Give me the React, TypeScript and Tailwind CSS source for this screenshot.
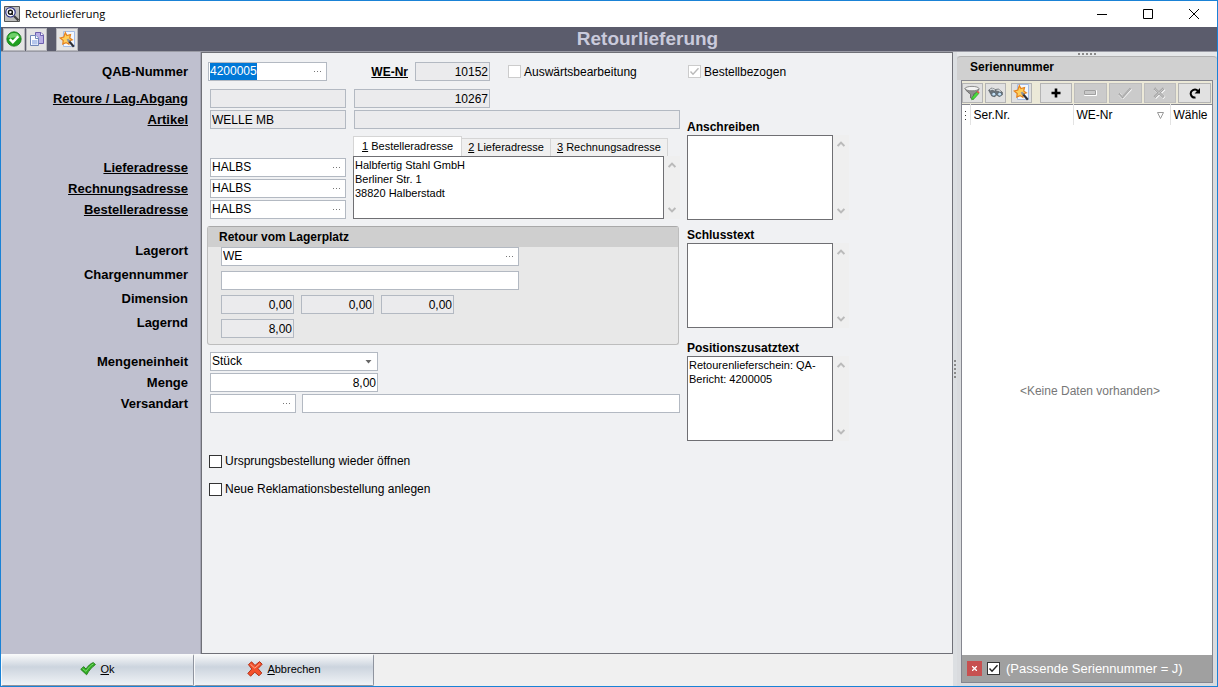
import { ReactNode, useEffect, useRef } from "react";
import clsx from "clsx";

const fieldBox = "h-[19px] border border-[#b3b9c2] text-[12px] leading-[17px] text-black";

const ConfirmIcon = () => (
  <svg width="16" height="16" viewBox="0 0 16 16">
    <circle cx="8" cy="8" r="7.2" fill="#1fa01f" stroke="#14761a" strokeWidth="0.8" />
    <path d="M2.2 6.5a6 6 0 0 1 11.6 0C10 5 6 8 2.2 6.5z" fill="#6fd06a" />
    <path d="M3.8 8.2l3 3L12.3 5.4" fill="none" stroke="#fff" strokeWidth="2.4" />
  </svg>
);

const CopyIcon = () => (
  <svg width="16" height="16" viewBox="0 0 16 16">
    <path d="M6.5 1.5h5.5l2.5 2.5v8.5h-8z" fill="#b9aee6" stroke="#6d5fae" />
    <path d="M11.5 1.5v3h3" fill="#fff" stroke="#6d5fae" />
    <path d="M1.5 4.5h5.5l2.5 2.5v7.5h-8z" fill="#fbfcff" stroke="#6f86b8" />
    <path d="M6.5 4.5v3h3" fill="#fff" stroke="#6f86b8" />
    <path d="M3 9h5.5v4.5H3z" fill="#b4c6ec" />
  </svg>
);

const WizardIcon = () => (
  <svg width="17" height="17" viewBox="0 0 17 17">
    <path d="M4.5 .5h11v15h-11z" fill="#f2f7ff" stroke="#a3bce6" />
    <path d="M6.3 1.6l1.6 2.9 3.6-1-.8 3.5 2.6 1.8-3.1 1.2-.3 3.3-2.9-1.7-3.2 1.5.4-3.6L1.2 7l3.6-.9z" fill="#ffcf5c" stroke="#e5821c" strokeWidth="1.2" />
    <path d="M9.4 9.4l5.4 6.4" stroke="#2e3038" strokeWidth="2.2" />
    <path d="M8.4 8.2l2 2.4" stroke="#8f94a0" strokeWidth="2" />
  </svg>
);

const FilterIcon = () => (
  <svg width="16" height="16" viewBox="0 0 16 16">
    <path d="M1 3.5C3 7 5 8 6.5 9.2V13l3 1.3V9C12 8 14 6.5 15 4z" fill="#8f8f8f" stroke="#5c5c5c" strokeWidth="0.8" />
    <ellipse cx="8" cy="3.6" rx="7" ry="2.2" fill="#f3f3f3" stroke="#777" strokeWidth="0.8" />
    <path d="M7.6 14.8l.6-2.6 4.6-5.4 2 1.7-4.7 5.3z" fill="#4bdc3c" stroke="#2a9b25" strokeWidth="0.7" />
    <path d="M12.6 7l1.2-1.2 1.8 1.5-1 1.3z" fill="#e2574c" />
  </svg>
);

const BinocularsIcon = () => (
  <svg width="15" height="15" viewBox="0 0 16 16">
    <path d="M.6 5.5l3.4-2.3 4 1.6 3-.6 4.4 3.6v2.7l-3.4 1.8-3-1.6-1.6 1.8-3.4-.7z" fill="#6a7177" stroke="#4d5358" strokeWidth="0.6" />
    <path d="M2.2 5.4l2.4-1.2 2.8 1.4M9 5.6l2.2-.2 2.2 1.8" fill="none" stroke="#dde1e4" strokeWidth="1.3" />
    <ellipse cx="6.2" cy="9.8" rx="2.2" ry="2" fill="#c4e0f5" stroke="#4a5966" strokeWidth="0.8" />
    <ellipse cx="12.4" cy="9.8" rx="2.2" ry="2" fill="#c4e0f5" stroke="#4a5966" strokeWidth="0.8" />
  </svg>
);

const PlusIcon = () => (
  <svg width="10" height="10" viewBox="0 0 10 10">
    <path d="M5 .5v9M.5 5h9" stroke="#000" strokeWidth="2.6" />
  </svg>
);

const MinusIcon = () => (
  <svg width="13" height="6" viewBox="0 0 13 6">
    <path d="M.5 .5h12v5H.5z" fill="#c9c9c9" stroke="#fff" />
    <path d="M.5 4.5v-4h11v4z" fill="none" stroke="#a0a0a0" />
  </svg>
);

const PostIcon = () => (
  <svg width="14" height="12" viewBox="0 0 14 12">
    <path d="M1.4 7l3.3 3.6L13 1.8" fill="none" stroke="#fff" strokeWidth="2.6" />
    <path d="M1 6.6l3.5 3.6L12.6 1.4" fill="none" stroke="#a0a0a0" strokeWidth="2" />
    <path d="M1.4 6.8l3.2 3.2 7.7-8" fill="none" stroke="#cbcbcb" strokeWidth="0.7" />
  </svg>
);

const CancelIcon = () => (
  <svg width="13" height="12" viewBox="0 0 13 12">
    <path d="M2 1.8l9.4 9M11.4 1.8L2 10.8" stroke="#fff" strokeWidth="3" />
    <path d="M1.4 1.2l9.4 9M10.8 1.2l-9.4 9" stroke="#a4a4a4" strokeWidth="2.6" />
    <path d="M1.6 1.4l9 8.6M10.6 1.4l-9 8.6" stroke="#cbcbcb" strokeWidth="1" />
  </svg>
);

const RefreshIcon = () => (
  <svg width="12" height="12" viewBox="0 0 12 12">
    <path d="M6.5 10.5A4 4 0 1 1 9 4.2" fill="none" stroke="#000" strokeWidth="2" />
    <path d="M11 1v5.6H5.6z" fill="#000" />
  </svg>
);

const OkIcon = () => (
  <svg width="16" height="14" viewBox="0 0 16 14">
    <path d="M.8 7.4L3.6 4.6 6 7C8.2 3.8 10.6 1.4 13.4 .6l2 2C12 5 9 8.4 6.6 12.8z" fill="#2fae22" stroke="#237a1a" strokeWidth="0.9" />
    <path d="M2.6 6.6L6 9.4c2-3.2 4.4-5.8 7.4-7.6" fill="none" stroke="#7fd870" strokeWidth="1" />
  </svg>
);

const AbortIcon = () => (
  <svg width="16" height="16" viewBox="0 0 16 16">
    <path d="M1.4 3.6L4.6 .8 8 4.4 12.6.6 15.2 3.2 11 7.6 14.8 12 12 14.8 7.8 11.2 3.6 15.2.8 12.4 4.8 8z" fill="#f4512c" stroke="#a82a12" strokeWidth="0.9" />
    <path d="M3.4 3.2l4.4 4L12.8 2.8" fill="none" stroke="#ffab8f" strokeWidth="1" />
  </svg>
);

const AppIcon = () => (
  <svg width="16" height="16" viewBox="0 0 16 16">
    <path d="M.5 .5h15v15H.5z" fill="#bdbdbd" stroke="#555" />
    <circle cx="6.5" cy="6.3" r="4.7" fill="#fff" stroke="#2a2f86" strokeWidth="1.2" />
    <circle cx="6.4" cy="6.2" r="2" fill="none" stroke="#111" strokeWidth="1.4" />
    <path d="M7 7l1.8 1.8" stroke="#111" strokeWidth="1.2" />
    <path d="M10 10l4.4 4.4" stroke="#444" strokeWidth="2.2" />
  </svg>
);

const Caret = ({ up }: { up?: boolean }) => (
  <svg width="8" height="6" viewBox="0 0 8 6">
    <path d={up ? "M.6 5L4 1.6 7.4 5" : "M.6 1L4 4.4 7.4 1"} fill="none" stroke="#bababa" strokeWidth="2" />
  </svg>
);

type FieldProps = {
  id: string;
  value?: string;
  width: string;
  readOnly?: boolean;
  numeric?: boolean;
  label?: string;
};

const Field = ({ id, value = "", width, readOnly, numeric, label }: FieldProps) => (
  <input
    id={id}
    aria-label={label}
    defaultValue={value}
    readOnly={readOnly}
    className={clsx(
      fieldBox,
      width,
      "px-px outline-none",
      readOnly ? "bg-[#ebebed]" : "bg-white",
      numeric && "text-right"
    )}
  />
);

const LookupField = ({ id, value = "", width, selected, label }: FieldProps & { selected?: boolean }) => {
  const ref = useRef<HTMLInputElement>(null);
  useEffect(() => {
    if (selected) ref.current?.select();
  }, [selected]);

  return (
    <div className={clsx(fieldBox, width, "flex bg-white pr-px")}>
      <input
        ref={ref}
        id={id}
        aria-label={label}
        defaultValue={value}
        className="min-w-0 flex-1 px-px outline-none selection:bg-[#0078d7] selection:text-white"
      />
      <button aria-label="Auswahl" className="flex w-4 items-center justify-center gap-0.5">
        <i className="size-px bg-[#777]" />
        <i className="size-px bg-[#777]" />
        <i className="size-px bg-[#777]" />
      </button>
    </div>
  );
};

const Memo = ({ id, value = "", height, label }: { id: string; value?: string; height: string; label?: string }) => (
  <div className={clsx("flex", height)}>
    <textarea
      id={id}
      aria-label={label}
      defaultValue={value}
      className="min-w-0 flex-1 resize-none overflow-hidden border border-[#6f6f73] bg-white p-px text-[11px] leading-[14px] outline-none"
    />
    <div className="flex w-4 flex-col items-center justify-between bg-[#efefef] py-1.5">
      <Caret up />
      <Caret />
    </div>
  </div>
);

const Check = ({ label, checked, disabled }: { label: string; checked?: boolean; disabled?: boolean }) => (
  <label className="flex h-4 items-center gap-[3px] text-[12px] leading-4 whitespace-nowrap">
    <span className="relative flex size-[13px]">
      <input
        type="checkbox"
        defaultChecked={checked}
        disabled={disabled}
        className={clsx(
          "peer size-[13px] appearance-none border bg-white",
          disabled ? "border-[#cccccc]" : "border-[#333333]"
        )}
      />
      <svg className="pointer-events-none absolute inset-0 hidden peer-checked:block" viewBox="0 0 13 13">
        <path d="M2.5 6.5L5 9.2l5.5-6" fill="none" stroke={disabled ? "#b9b9b9" : "#222"} strokeWidth="1.4" />
      </svg>
    </span>
    {label}
  </label>
);

const FormLabel = ({ htmlFor, link, children }: { htmlFor: string; link?: boolean; children: ReactNode }) => (
  <label htmlFor={htmlFor} className={clsx("text-[13px] leading-[19px] font-bold", link && "underline")}>
    {children}
  </label>
);

const ToolButton = ({ label, width, disabled, children }: { label: string; width: string; disabled?: boolean; children: ReactNode }) => (
  <button
    aria-label={label}
    disabled={disabled}
    className={clsx(
      "flex h-5 items-center justify-center border",
      width,
      disabled ? "border-[#bdbdbd] bg-[#cbcbcb]" : "border-[#b4b4b4] bg-[#e1e1e1]"
    )}
  >
    {children}
  </button>
);

const Grip = ({ vertical }: { vertical?: boolean }) => (
  <div className={clsx("flex gap-0.5", vertical && "flex-col")}>
    {[0, 1, 2, 3, 4].map((i) => (
      <i key={i} className="size-0.5 bg-[#8a8a8a]" />
    ))}
  </div>
);

const TitleBar = () => (
  <div className="flex h-[26px] items-center bg-white pl-[3px]">
    <AppIcon />
    <span className="ml-[5px] flex-1 font-['Open_Sans',sans-serif] text-[11px]">Retourlieferung</span>
    <button aria-label="Minimieren" className="flex h-full w-[46px] items-center justify-center">
      <svg width="10" height="10"><path d="M0 5.5h10" stroke="#000" /></svg>
    </button>
    <button aria-label="Maximieren" className="flex h-full w-[46px] items-center justify-center">
      <svg width="10" height="10"><path d="M.5 .5h9v9h-9z" fill="none" stroke="#000" /></svg>
    </button>
    <button aria-label="Schließen" className="flex h-full w-[46px] items-center justify-center">
      <svg width="10" height="10"><path d="M0 0l10 10M10 0L0 10" stroke="#000" /></svg>
    </button>
  </div>
);

const headButton = "flex h-[23px] w-[23px] items-center justify-center border border-[#b5b5bb] bg-[#e4e4e4]";

const Header = () => (
  <header className="grid h-[25px] grid-cols-[76px_1fr] items-center border-b border-[#9a9ba5] bg-[#5b5c6c] pl-px">
    <div className="flex gap-px pl-px">
      <button aria-label="Bestätigen" className={headButton}><ConfirmIcon /></button>
      <button aria-label="Kopieren" className={headButton}><CopyIcon /></button>
      <button aria-label="Assistent" className={clsx(headButton, "ml-2")}><WizardIcon /></button>
    </div>
    <h1 className="text-center text-[19px] leading-6 font-bold text-[#c9cadb]">Retourlieferung</h1>
  </header>
);

const Labels = () => (
  <aside className="flex w-[200px] shrink-0 flex-col items-end border-r border-[#a3a4b2] bg-[#bfc0cf] pt-2.5 pr-3">
    <FormLabel htmlFor="qab">QAB-Nummer</FormLabel>
    <div className="mt-2 flex flex-col items-end gap-0.5">
      <FormLabel htmlFor="retoure" link>Retoure / Lag.Abgang</FormLabel>
      <FormLabel htmlFor="artikel" link>Artikel</FormLabel>
    </div>
    <div className="mt-[29px] flex flex-col items-end gap-0.5">
      <FormLabel htmlFor="liefer" link>Lieferadresse</FormLabel>
      <FormLabel htmlFor="rechnung" link>Rechnungsadresse</FormLabel>
      <FormLabel htmlFor="besteller" link>Bestelleradresse</FormLabel>
    </div>
    <div className="mt-[22px] flex flex-col items-end gap-[5px]">
      <FormLabel htmlFor="lagerort">Lagerort</FormLabel>
      <FormLabel htmlFor="charge">Chargennummer</FormLabel>
      <FormLabel htmlFor="dim1">Dimension</FormLabel>
      <FormLabel htmlFor="lagernd">Lagernd</FormLabel>
    </div>
    <div className="mt-5 flex flex-col items-end gap-0.5">
      <FormLabel htmlFor="einheit">Mengeneinheit</FormLabel>
      <FormLabel htmlFor="menge">Menge</FormLabel>
      <FormLabel htmlFor="versand">Versandart</FormLabel>
    </div>
  </aside>
);

const tab = "border border-b-0 border-[#d5d5d5] text-[11px] whitespace-nowrap";

const AddressBlock = () => (
  <div className="mt-[7px] flex gap-[7px] pl-2">
    <div className="flex flex-col gap-0.5 pt-[22px]">
      <LookupField id="liefer" value="HALBS" width="w-[136px]" />
      <LookupField id="rechnung" value="HALBS" width="w-[136px]" />
      <LookupField id="besteller" value="HALBS" width="w-[136px]" />
    </div>
    <div className="w-[327px]">
      <div role="tablist" className="flex h-5 items-end">
        <button role="tab" aria-selected="true" className={clsx(tab, "h-5 bg-white px-2")}><u>1</u> Bestelleradresse</button>
        <button role="tab" className={clsx(tab, "h-[18px] border-l-0 bg-[#f0f0f0] px-1.5")}><u>2</u> Lieferadresse</button>
        <button role="tab" className={clsx(tab, "h-[18px] border-l-0 bg-[#f0f0f0] px-1.5")}><u>3</u> Rechnungsadresse</button>
      </div>
      <Memo
        id="adresse"
        label="Adresse"
        height="h-[63px]"
        value={"Halbfertig Stahl GmbH\nBerliner Str. 1\n38820 Halberstadt"}
      />
    </div>
  </div>
);

const StorageGroup = () => (
  <section className="mt-[7px] mr-px ml-[5px] rounded-[3px] border border-[#bdbdbd] border-t-[#a9a9a9] bg-[#e8e8e8]">
    <h2 className="h-5 bg-[#cfcfcf] pl-[11px] text-[12px] leading-5 font-bold">Retour vom Lagerplatz</h2>
    <div className="flex flex-col gap-[5px] pb-1.5 pl-[13px]">
      <LookupField id="lagerort" value="WE" width="w-[298px]" />
      <Field id="charge" width="w-[298px]" />
      <div className="flex gap-[7px]">
        <Field id="dim1" value="0,00" width="w-[73px]" readOnly numeric />
        <Field id="dim2" label="Dimension 2" value="0,00" width="w-[73px]" readOnly numeric />
        <Field id="dim3" label="Dimension 3" value="0,00" width="w-[73px]" readOnly numeric />
      </div>
      <Field id="lagernd" value="8,00" width="w-[73px]" readOnly numeric />
    </div>
  </section>
);

const memoLabel = "block text-[12px] leading-4 font-bold";

const Form = () => (
  <main className="flex-1 border border-[#6f7077] bg-[#f0f1f3] pt-[9px]">
    <div className="flex h-[19px] items-center pl-1.5">
      <div className="flex w-[480px] items-center">
        <LookupField id="qab" value="4200005" width="w-[119px]" selected />
        <label htmlFor="we" className="mr-[7px] w-[81px] text-right text-[12px] font-bold underline">WE-Nr</label>
        <div className="mr-[18px] flex">
          <Field id="we" value="10152" width="w-[75px]" readOnly numeric />
        </div>
        <Check label="Auswärtsbearbeitung" disabled />
      </div>
      <Check label="Bestellbezogen" checked disabled />
    </div>

    <div className="mt-2 flex">
      <div className="w-[478px] shrink-0">
        <div className="flex gap-2 pl-2">
          <Field id="retoure" width="w-[136px]" readOnly />
          <Field id="abgang" label="Lagerabgang" value="10267" width="w-[136px]" readOnly numeric />
        </div>
        <div className="mt-0.5 flex gap-2 pl-2">
          <Field id="artikel" value="WELLE MB" width="w-[136px]" readOnly />
          <Field id="bezeichnung" label="Bezeichnung" width="w-[326px]" readOnly />
        </div>
        <AddressBlock />
        <StorageGroup />
        <div className="mt-[7px] flex flex-col gap-0.5 pl-2">
          <div className="relative flex w-[168px]">
            <select id="einheit" className={clsx(fieldBox, "w-full appearance-none bg-white px-px outline-none")}>
              <option>Stück</option>
            </select>
            <svg className="pointer-events-none absolute top-2 right-[6px]" width="7" height="4">
              <path d="M.5 0h6L3.5 3.5z" fill="#666" />
            </svg>
          </div>
          <Field id="menge" value="8,00" width="w-[168px]" numeric />
          <div className="flex gap-1.5">
            <LookupField id="versand" width="w-[86px]" />
            <Field id="versandtext" label="Versandart Text" width="w-[378px]" />
          </div>
        </div>
        <div className="mt-10 flex flex-col gap-3 pl-[7px]">
          <Check label="Ursprungsbestellung wieder öffnen" />
          <Check label="Neue Reklamationsbestellung anlegen" />
        </div>
      </div>

      <div className="ml-[7px] w-[162px] pt-[30px]">
        <label htmlFor="anschreiben" className={memoLabel}>Anschreiben</label>
        <Memo id="anschreiben" height="h-[85px]" />
        <label htmlFor="schluss" className={clsx(memoLabel, "mt-[7px]")}>Schlusstext</label>
        <Memo id="schluss" height="h-[85px]" />
        <label htmlFor="position" className={clsx(memoLabel, "mt-3")}>Positionszusatztext</label>
        <Memo id="position" height="h-[85px]" value="Retourenlieferschein: QA-Bericht: 4200005" />
      </div>
    </div>
  </main>
);

const footButton =
  "flex items-center justify-center gap-1 rounded-[2px] border border-t-[#f8f9fa] border-l-[#f8f9fa] border-r-[#8f949f] border-b-[#8f949f] bg-linear-to-b from-[#f7f8f9] from-0% via-[#ccd4de] via-40% to-[#f0f3f6] pb-0.5 text-[11px]";

const Footer = () => (
  <footer className="flex h-8 bg-[#f0f0f0]">
    <button className={clsx(footButton, "w-[193px]")}>
      <OkIcon />
      <span><u>O</u>k</span>
    </button>
    <button className={clsx(footButton, "w-[180px]")}>
      <AbortIcon />
      <span><u>A</u>bbrechen</span>
    </button>
  </footer>
);

const SerialDock = () => (
  <aside className="flex w-[260px] shrink-0 flex-col bg-[#d9dbde]">
    <div className="flex h-1 items-center justify-center bg-[#e6e8ea]">
      <Grip />
    </div>
    <h2 className="h-6 rounded-t border-t border-[#b0b0b0] bg-[#d0d0d0] pl-[13px] text-[12px] leading-[21px] font-bold">Seriennummer</h2>
    <div className="mr-1 mb-[3px] ml-1 flex flex-1 flex-col border border-[#85868f]">
      <div className="flex h-[23px] items-center gap-0.5 overflow-hidden bg-[#ece9d8] pr-px">
        <ToolButton label="Filter" width="w-[21px]"><FilterIcon /></ToolButton>
        <ToolButton label="Suchen" width="w-[21px]"><BinocularsIcon /></ToolButton>
        <div className="mr-1.5 ml-[3px] flex">
          <ToolButton label="Assistent" width="w-[21px]"><WizardIcon /></ToolButton>
        </div>
        <ToolButton label="Neu" width="w-[33px]"><PlusIcon /></ToolButton>
        <ToolButton label="Löschen" width="w-[33px]" disabled><MinusIcon /></ToolButton>
        <ToolButton label="Speichern" width="w-[33px]" disabled><PostIcon /></ToolButton>
        <ToolButton label="Verwerfen" width="w-[33px]" disabled><CancelIcon /></ToolButton>
        <ToolButton label="Aktualisieren" width="w-[33px]"><RefreshIcon /></ToolButton>
      </div>
      <table className="w-full table-fixed border-t border-[#85868f] bg-white text-left text-[12px] leading-5">
        <thead>
          <tr>
            <th className="w-2 border-r border-[#e3e3e3]">
              <svg className="mx-auto" width="1" height="9"><path d="M.5 0v1M.5 4v1M.5 8v1" stroke="#333" /></svg>
            </th>
            <th className="w-[103px] border-r border-[#e3e3e3] pl-[3px] font-normal">Ser.Nr.</th>
            <th className="w-[97px] border-r border-[#e3e3e3] pl-[3px] font-normal">
              <div className="flex items-center justify-between pr-1.5">
                WE-Nr
                <svg width="7" height="7"><path d="M.5 .5h6l-3 6z" fill="#fff" stroke="#999" /></svg>
              </div>
            </th>
            <th className="pl-[3px] font-normal">Wähle</th>
          </tr>
        </thead>
      </table>
      <div className="flex flex-1 items-center justify-center bg-white pt-0.5 pl-1.5 text-[12px] text-[#777777]">
        &lt;Keine Daten vorhanden&gt;
      </div>
      <div className="flex h-[27px] items-center bg-[#a0a0a0] pl-[5px] text-white">
        <button aria-label="Filter entfernen" className="mr-[5px] flex size-[15px] items-center justify-center bg-[#c75050]">
          <svg width="5" height="5"><path d="M0 0l5 5M5 0L0 5" stroke="#fff" strokeWidth="1.3" /></svg>
        </button>
        <Check label="" checked />
        <span className="ml-1.5 text-[13px]">(Passende Seriennummer = J)</span>
      </div>
    </div>
  </aside>
);

export default function App() {
  return (
    <div className="flex min-h-screen flex-col border border-[#1a82d6] bg-[#f0f0f0] font-['Liberation_Sans',Arial,sans-serif] text-black">
      <TitleBar />
      <Header />
      <div className="flex flex-1">
        <div className="flex min-w-0 flex-1 flex-col">
          <div className="flex flex-1">
            <Labels />
            <Form />
          </div>
          <Footer />
        </div>
        <div className="flex w-1 items-center justify-center bg-[#dcdfe2]">
          <Grip vertical />
        </div>
        <SerialDock />
      </div>
    </div>
  );
}
